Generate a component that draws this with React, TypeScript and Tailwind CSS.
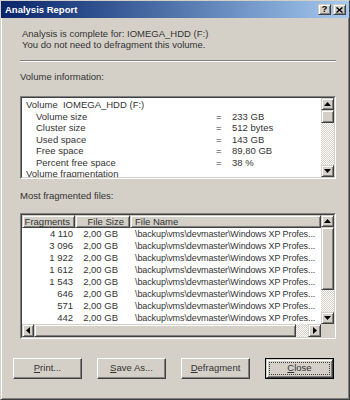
import { FunctionComponent, ReactNode } from "react";

type Dir = "up" | "down" | "left" | "right";

const Arrow: FunctionComponent<{ dir: Dir }> = ({ dir }) => {
  const vertical = dir === "up" || dir === "down";
  const points = {
    up: "0,4 7,4 3.5,0",
    down: "0,0 7,0 3.5,4",
    left: "4,0 4,7 0,3.5",
    right: "0,0 0,7 4,3.5",
  }[dir];
  return (
    <svg width={vertical ? 7 : 4} height={vertical ? 4 : 7} viewBox={vertical ? "0 0 7 4" : "0 0 4 7"}>
      <polygon points={points} fill="#000" />
    </svg>
  );
};

const Raised: FunctionComponent<{ className?: string; children?: ReactNode }> = ({ className = "", children }) => (
  <div
    className={`bg-[#d4d0c8] border border-t-[#d4d0c8] border-l-[#d4d0c8] border-r-[#404040] border-b-[#404040] shadow-[inset_1px_1px_#ffffff,inset_-1px_-1px_#808080] ${className}`}
  >
    {children}
  </div>
);

const Track: FunctionComponent<{ className?: string }> = ({ className = "" }) => (
  <div
    className={`bg-[repeating-conic-gradient(#d4d0c8_0%_25%,#ffffff_0%_50%)] bg-[length:2px_2px] ${className}`}
  />
);

const Sunken: FunctionComponent<{ className?: string; children?: ReactNode }> = ({ className = "", children }) => (
  <div className={`border border-t-[#808080] border-l-[#808080] border-r-white border-b-white ${className}`}>
    <div className="h-full border border-t-[#404040] border-l-[#404040] border-r-[#d4d0c8] border-b-[#d4d0c8] bg-white flex overflow-hidden">
      {children}
    </div>
  </div>
);

const volumeRows = [
  ["Volume size", "233 GB"],
  ["Cluster size", "512 bytes"],
  ["Used space", "143 GB"],
  ["Free space", "89,80 GB"],
  ["Percent free space", "38 %"],
];

const fragments = ["4 110", "3 096", "1 922", "1 612", "1 543", "646", "571", "442"];

const Button: FunctionComponent<{ label: string; hot: string; isDefault?: boolean }> = ({ label, hot, isDefault }) => {
  const rest = label.slice(hot.length);
  const text = (
    <span className="text-[9.5px] text-[#333]">
      <span className="underline underline-offset-1">{hot}</span>
      {rest}
    </span>
  );
  if (isDefault) {
    return (
      <div className="w-[69px] h-[21px] border border-black">
        <Raised className="h-full flex items-center justify-center p-[2px]">
          <div className="w-full h-full border border-dotted border-[#404040] flex items-center justify-center">
            {text}
          </div>
        </Raised>
      </div>
    );
  }
  return (
    <div className="w-[69px] h-[21px] border border-t-white border-l-white border-r-[#404040] border-b-[#404040] bg-[#d4d0c8] shadow-[inset_-1px_-1px_#808080] flex items-center justify-center">
      {text}
    </div>
  );
};

export default function App() {
  return (
    <div className="w-[350px] h-[400px] bg-[#d4d0c8] border border-t-[#d4d0c8] border-l-[#d4d0c8] border-r-[#404040] border-b-[#404040] shadow-[inset_1px_1px_#ffffff,inset_-1px_-1px_#808080] flex flex-col font-['Liberation_Sans',Arial,sans-serif] text-black overflow-hidden">
      {/* title bar */}
      <div className="h-[17px] bg-linear-to-r from-[#0a246a] to-[#a6caf0] flex items-center pl-[4px] pr-[3px]">
        <span className="text-white font-bold text-[9.5px] leading-[17px] flex-1">Analysis Report</span>
        <Raised className="w-[13px] h-[11px] flex items-center justify-center">
          <span className="text-[9px] font-bold leading-none">?</span>
        </Raised>
        <Raised className="w-[13px] h-[11px] ml-[2px] flex items-center justify-center">
          <svg width="7" height="6" viewBox="0 0 7 6">
            <path d="M0.5 0.5 L6.5 5.5 M6.5 0.5 L0.5 5.5" stroke="#000" strokeWidth="1.4" />
          </svg>
        </Raised>
      </div>

      <div className="pl-[21px] mt-[10px] text-[9.5px] leading-[11px] text-[#333]">
        <p>Analysis is complete for: IOMEGA_HDD (F:)</p>
        <p>You do not need to defragment this volume.</p>
      </div>

      <div className="ml-[19px] mr-[13px] mt-[10px] border-t border-t-[#808080] border-b border-b-white" />

      <p className="ml-[19px] mt-[9px] text-[9.5px] leading-[11px] text-[#333]">Volume information:</p>

      <Sunken className="ml-[19px] mr-[13px] mt-[14px] h-[83px]">
        <div className="flex-1 pt-[1px] text-[9.5px] leading-[11.5px] text-[#333]">
          <div className="pl-[4px] whitespace-pre">Volume  IOMEGA_HDD (F:)</div>
          {volumeRows.map(([label, value]) => (
            <div key={label} className="flex pl-[14px]">
              <span className="w-[180px]">{label}</span>
              <span className="w-[16px]">=</span>
              <span>{value}</span>
            </div>
          ))}
          <div className="pl-[4px]">Volume fragmentation</div>
        </div>
        <div className="w-[13px] flex flex-col">
          <Raised className="h-[12px] flex items-center justify-center">
            <Arrow dir="up" />
          </Raised>
          <Raised className="h-[13px]" />
          <Track className="flex-1" />
          <Raised className="h-[12px] flex items-center justify-center">
            <Arrow dir="down" />
          </Raised>
        </div>
      </Sunken>

      <p className="ml-[19px] mt-[11px] text-[9.5px] leading-[11px] text-[#333]">Most fragmented files:</p>

      <Sunken className="ml-[19px] mr-[13px] mt-[12px] h-[126px]">
        <div className="flex-1 flex flex-col min-w-0">
          <div className="flex-1 flex min-h-0">
            <div className="flex-1 min-w-0 text-[9.5px] text-[#333]">
              <div className="flex h-[13px]">
                <Raised className="w-[53px] pr-[4px] text-right leading-[11px]">Fragments</Raised>
                <Raised className="w-[55px] pr-[5px] text-right leading-[11px]">File Size</Raised>
                <Raised className="flex-1 pl-[4px] leading-[11px]">File Name</Raised>
              </div>
              {fragments.map((f) => (
                <div key={f} className="flex h-[12px] leading-[12px]">
                  <span className="w-[53px] pr-[2px] text-right">{f}</span>
                  <span className="w-[55px] pr-[12px] text-right">2,00 GB</span>
                  <span className="flex-1 pl-[5px] whitespace-nowrap text-[9px] tracking-[-0.1px]">
                    \backup\vms\devmaster\Windows XP Profes...
                  </span>
                </div>
              ))}
            </div>
            <div className="w-[13px] flex flex-col">
              <Raised className="h-[12px] flex items-center justify-center">
                <Arrow dir="up" />
              </Raised>
              <Raised className="h-[63px]" />
              <Track className="flex-1" />
              <Raised className="h-[12px] flex items-center justify-center">
                <Arrow dir="down" />
              </Raised>
            </div>
          </div>
          <div className="h-[13px] flex">
            <Raised className="w-[12px] flex items-center justify-center">
              <Arrow dir="left" />
            </Raised>
            <Raised className="w-[262px]" />
            <Track className="flex-1" />
            <Raised className="w-[13px] flex items-center justify-center">
              <Arrow dir="right" />
            </Raised>
            <div className="w-[13px] bg-[#d4d0c8]" />
          </div>
        </div>
      </Sunken>

      <div className="flex gap-[15px] pl-[12px] mt-[19px]">
        <Button label="Print..." hot="P" />
        <Button label="Save As..." hot="S" />
        <Button label="Defragment" hot="D" />
        <Button label="Close" hot="C" isDefault />
      </div>
    </div>
  );
}
